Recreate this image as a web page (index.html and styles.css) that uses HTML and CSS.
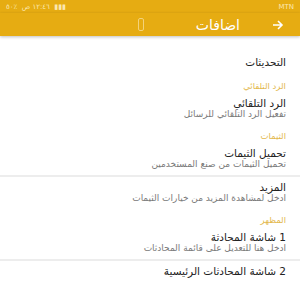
FILE: index.html
```html
<!DOCTYPE html>
<html lang="ar" dir="rtl">
<head>
    <meta charset="UTF-8">
    <meta name="viewport" content="width=device-width, initial-scale=1.0">
    <link rel="stylesheet" href="styles.css">
    <title>اضافات</title>
</head>
<body>

    <div class="status">
        <span class="carrier">MTN</span>
        <span class="clock">١٢:٤٦ ص &nbsp;٪٥٠ &nbsp;▮▮▮</span>
    </div>

    <header class="toolbar">
        <svg class="back" width="12" height="10" viewBox="0 0 12 10">
            <path d="M1 5h9M6 1l4 4-4 4" fill="none" stroke="#fff" stroke-width="1.6"/>
        </svg>
        <h1>اضافات</h1>
        <span class="tool-icon"></span>
    </header>

    <div class="list">
        <div class="pref first">
            <div class="title">التحديثات</div>
        </div>

        <div class="cat">الرد التلقائي</div>
        <div class="pref">
            <div class="title">الرد التلقائي</div>
            <div class="sub">تفعيل الرد التلقائي للرسائل</div>
        </div>

        <div class="cat">الثيمات</div>
        <div class="pref">
            <div class="title">تحميل الثيمات</div>
            <div class="sub">تحميل الثيمات من صنع المستخدمين</div>
        </div>
        <div class="divider"></div>
        <div class="pref">
            <div class="title">المزيد</div>
            <div class="sub">ادخل لمشاهدة المزيد من خيارات الثيمات</div>
        </div>

        <div class="cat">المظهر</div>
        <div class="pref">
            <div class="title">1 شاشة المحادثة</div>
            <div class="sub">ادخل هنا للتعديل على قائمة المحادثات</div>
        </div>
        <div class="divider"></div>
        <div class="pref">
            <div class="title">2 شاشة المحادثات الرئيسية</div>
        </div>
    </div>

</body>
</html>
```

FILE: styles.css
```css
body {
    margin: 0;
    font-family: "DejaVu Sans", "Noto Sans", sans-serif;
    background-color: #fff;
    overflow: hidden;
}

.status {
    height: 13px;
    background-color: #e6ac12;
    color: #fbe7b0;
    font-size: 7px;
    display: flex;
    justify-content: space-between;
    align-items: center;
    padding: 0 6px;
    direction: ltr;
    flex-direction: row-reverse;
}

.toolbar {
    height: 23px;
    background-color: #e6ac12;
    display: flex;
    align-items: center;
    padding: 0 16px 0 0;
    box-shadow: 0 1px 3px rgba(0, 0, 0, 0.25);
    position: relative;
}

.back {
    margin-left: 32px;
}

.toolbar h1 {
    margin: 0;
    color: #fff;
    font-size: 14px;
    font-weight: normal;
}

.tool-icon {
    width: 4px;
    height: 11px;
    margin-right: 52px;
    border: 1px solid #f3d27a;
    border-radius: 2px;
}

.list {
    padding-top: 1px;
}

.pref {
    padding: 4px 14px 5px;
    white-space: nowrap;
}

.pref.first {
    padding: 19px 14px 7px;
}

.title {
    font-size: 10.5px;
    line-height: 12px;
    color: #222;
}

.sub {
    font-size: 9px;
    line-height: 11px;
    color: #7a7a7a;
}

.cat {
    padding: 5px 14px 1px;
    font-size: 8.5px;
    line-height: 12px;
    color: #e3b84c;
}

.divider {
    height: 2px;
    background-color: #ededed;
}
```
